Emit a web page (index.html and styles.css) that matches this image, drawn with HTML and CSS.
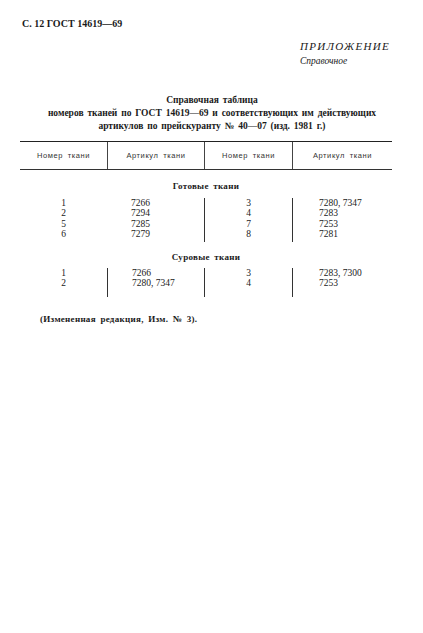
FILE: index.html
```html
<!DOCTYPE html>
<html lang="ru">
<head>
<meta charset="utf-8">
<link rel="stylesheet" href="styles.css">
</head>
<body>
<div class="page">
  <div class="running-head">С. 12 ГОСТ 14619—69</div>
  <div class="appendix">
    <div class="appendix-title">ПРИЛОЖЕНИЕ</div>
    <div class="appendix-sub">Справочное</div>
  </div>
  <div class="title">
    <div class="title-line">Справочная таблица</div>
    <div class="title-line">номеров тканей по ГОСТ 14619—69 и соответствующих им действующих</div>
    <div class="title-line">артикулов по прейскуранту № 40—07 (изд. 1981 г.)</div>
  </div>
  <div class="table">
    <div class="thead">
      <div class="th">Номер ткани</div>
      <div class="th sep">Артикул ткани</div>
      <div class="th sep">Номер ткани</div>
      <div class="th sep">Артикул ткани</div>
    </div>
    <div class="section first">Готовые ткани</div>
    <div class="block">
      <div class="col num"><span>1</span><span>2</span><span>5</span><span>6</span></div>
      <div class="col art"><span>7266</span><span>7294</span><span>7285</span><span>7279</span></div>
      <div class="col num sep"><span>3</span><span>4</span><span>7</span><span>8</span></div>
      <div class="col art last sep"><span>7280, 7347</span><span>7283</span><span>7253</span><span>7281</span></div>
    </div>
    <div class="section">Суровые ткани</div>
    <div class="block short">
      <div class="col num"><span>1</span><span>2</span></div>
      <div class="col art sep"><span>7266</span><span>7280, 7347</span></div>
      <div class="col num sep"><span>3</span><span>4</span></div>
      <div class="col art last sep"><span>7283, 7300</span><span>7253</span></div>
    </div>
  </div>
  <div class="note">(Измененная редакция, Изм. № 3).</div>
</div>
</body>
</html>
```
FILE: styles.css
```css
html, body {
  margin: 0;
  padding: 0;
  background: #ffffff;
}
body {
  width: 423px;
  height: 633px;
  overflow: hidden;
  color: #1a1a1a;
  font-family: "Liberation Serif", "DejaVu Serif", serif;
}
.page {
  padding: 18px 31px 0 20px;
  display: flex;
  flex-direction: column;
}
.running-head {
  padding-left: 2px;
  font-size: 10px;
  line-height: 12px;
  font-weight: bold;
}
.appendix {
  margin-top: 9px;
  padding-left: 280px;
  font-style: italic;
}
.appendix-title {
  font-size: 11px;
  line-height: 15px;
  letter-spacing: 1.3px;
}
.appendix-sub {
  font-size: 9.5px;
  line-height: 15px;
}
.title {
  margin-top: 25px;
  display: flex;
  flex-direction: column;
  align-items: center;
  padding-left: 12px;
  font-weight: bold;
  font-size: 9.5px;
  line-height: 13px;
}
.title-line {
  word-spacing: 1.5px;
  white-space: nowrap;
}
.table {
  margin-top: 8px;
  width: 372px;
}
.thead {
  display: grid;
  grid-template-columns: 87px 97px 88px 100px;
  border-top: 1.3px solid #222;
  border-bottom: 1.3px solid #333;
  height: 27px;
}
.th {
  display: flex;
  align-items: center;
  justify-content: center;
  font-family: "Liberation Sans", "DejaVu Sans", sans-serif;
  font-size: 7.5px;
  letter-spacing: 0.6px;
  word-spacing: 2px;
  color: #333;
}
.th.sep {
  border-left: 1px solid #444;
}
.section {
  margin-top: 9px;
  text-align: center;
  font-weight: bold;
  font-size: 9px;
  line-height: 12px;
  letter-spacing: 0.3px;
  word-spacing: 2px;
}
.section.first {
  margin-top: 10px;
}
.block {
  margin-top: 6px;
  display: grid;
  grid-template-columns: 87px 97px 88px 100px;
}
.col {
  display: flex;
  flex-direction: column;
  padding: 0 0 3px;
  font-size: 9.5px;
  line-height: 10.3px;
}
.col.sep {
  border-left: 1px solid #333;
}
.num {
  align-items: center;
}
.art {
  padding-left: 24px;
}
.art.last {
  padding-left: 26px;
}
.block.short {
  margin-top: 5px;
}
.block.short .col {
  padding-bottom: 8px;
}
.note {
  margin-top: 16px;
  padding-left: 20px;
  font-weight: bold;
  font-size: 9px;
  line-height: 12px;
  letter-spacing: 0.3px;
  word-spacing: 2px;
}
```
